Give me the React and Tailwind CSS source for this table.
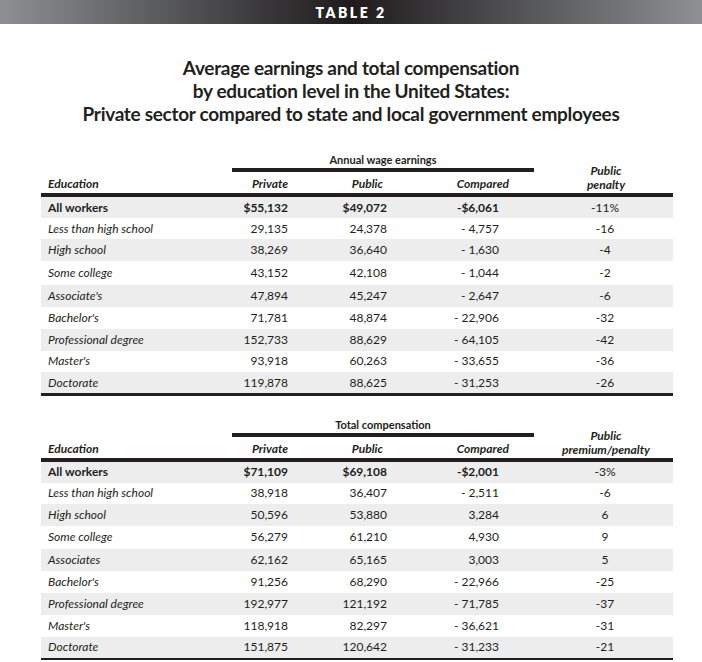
const wage = [
  ["All workers", "$55,132", "$49,072", "-$6,061", "-11%"],
  ["Less than high school", "29,135", "24,378", "- 4,757", "-16"],
  ["High school", "38,269", "36,640", "- 1,630", "-4"],
  ["Some college", "43,152", "42,108", "- 1,044", "-2"],
  ["Associate's", "47,894", "45,247", "- 2,647", "-6"],
  ["Bachelor's", "71,781", "48,874", "- 22,906", "-32"],
  ["Professional degree", "152,733", "88,629", "- 64,105", "-42"],
  ["Master's", "93,918", "60,263", "- 33,655", "-36"],
  ["Doctorate", "119,878", "88,625", "- 31,253", "-26"],
]

const comp = [
  ["All workers", "$71,109", "$69,108", "-$2,001", "-3%"],
  ["Less than high school", "38,918", "36,407", "- 2,511", "-6"],
  ["High school", "50,596", "53,880", "3,284", "6"],
  ["Some college", "56,279", "61,210", "4,930", "9"],
  ["Associates", "62,162", "65,165", "3,003", "5"],
  ["Bachelor's", "91,256", "68,290", "- 22,966", "-25"],
  ["Professional degree", "192,977", "121,192", "- 71,785", "-37"],
  ["Master's", "118,918", "82,297", "- 36,621", "-31"],
  ["Doctorate", "151,875", "120,642", "- 31,233", "-21"],
]

// row heights vary a little in the original
const heights = ["h-[21px]", "h-[21px]", "h-[22px]", "h-[23.5px]", "h-[22px]", "h-[22px]", "h-[22px]", "h-[21.5px]", "h-[21px]"]

function DataTable({ label, penalty, rows }) {
  return (
    <div className="ml-[41px] w-[632px] text-[#231f20]">
      <div className="flex">
        <div className="w-[468px]">
          <p className="ml-[191px] w-[302px] text-center text-[11px] font-bold leading-[14px]">{label}</p>
          <div className="ml-[191px] mt-[1px] h-[4px] w-[302px] bg-[#231f20]" />
          <div className="flex h-[21px] items-end pb-[2px] text-[12px] font-bold italic leading-[14px]">
            <div className="w-[159px] pl-[7px]">Education</div>
            <div className="w-[88px] text-right">Private</div>
            <div className="w-[95px] text-right">Public</div>
            <div className="w-[126px] text-right">Compared</div>
          </div>
        </div>
        <div className="flex w-[164px] flex-col justify-end pb-[1px] pl-[30px] text-center text-[12px] font-bold italic leading-[14px]">
          {penalty.map((t) => (
            <span key={t}>{t}</span>
          ))}
        </div>
      </div>
      <div className="h-[4px] bg-[#231f20]" />
      {rows.map((r, i) => (
        <div
          key={r[0]}
          className={`flex items-center text-[12px] ${heights[i]} ${i % 2 === 0 ? "bg-[#ecedec]" : ""} ${i === 0 ? "font-bold" : ""}`}
        >
          <div className={`w-[159px] pl-[7px] ${i === 0 ? "" : "italic"}`}>{r[0]}</div>
          <div className="w-[88px] text-right">{r[1]}</div>
          <div className="w-[99px] text-right">{r[2]}</div>
          <div className="w-[112px] text-right">{r[3]}</div>
          <div className={`w-[174px] pl-[38px] text-center ${i === 0 ? "font-normal" : ""}`}>{r[4]}</div>
        </div>
      ))}
      <div className="h-[2.5px] bg-[#231f20]" />
    </div>
  )
}

export default function App() {
  return (
    <div className="h-[662px] w-[702px] bg-white font-['Lato','Noto_Sans',sans-serif] text-[#231f20]">
      <div className="flex h-[24px] items-center justify-center bg-[linear-gradient(90deg,#8d8f92_0%,#4a4a4c_30%,#1f1b1c_50%,#4a4a4c_70%,#8d8f92_100%)]">
        <span className="text-[14px] font-extrabold tracking-[2.5px] text-white">TABLE 2</span>
      </div>

      <div className="mt-[32px] text-center text-[19px] font-bold leading-[23px] tracking-[-0.3px]">
        <p>Average earnings and total compensation</p>
        <p>by education level in the United States:</p>
        <p>Private sector compared to state and local government employees</p>
      </div>

      <div className="mt-[28px]">
        <DataTable label="Annual wage earnings" penalty={["Public", "penalty"]} rows={wage} />
      </div>

      <div className="mt-[22px]">
        <DataTable label="Total compensation" penalty={["Public", "premium/penalty"]} rows={comp} />
      </div>
    </div>
  )
}
